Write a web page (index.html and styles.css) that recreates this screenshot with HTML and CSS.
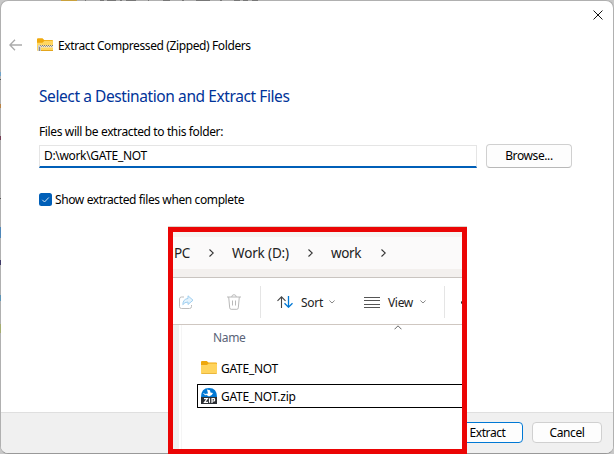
FILE: index.html
```html
<!DOCTYPE html>
<html lang="en">
<head>
<meta charset="utf-8">
<title>Extract Compressed (Zipped) Folders</title>
<link rel="stylesheet" href="styles.css">
</head>
<body>
<div class="desktop">
  <main class="dialog">
    <div class="titlebar">
      <svg class="close" viewBox="0 0 11 11"><path d="M.6.6l9.8 9.8M10.4.6L.6 10.4"/></svg>
    </div>
    <header class="head">
      <svg class="back" viewBox="0 0 13 12"><path d="M6 .7L.9 6 6 11.3M1 6h12"/></svg>
      <svg class="folder" viewBox="0 0 16 14">
        <path d="M0 1.2Q0 .2 1 .2h4.500L7.200 2H15q1 0 1 1v3H0z" fill="#f0a90c"/>
        <path d="M0 4.800h5.500L7.500 2.700H15q1 0 1 1V12q0 1-1 1H1q-1 0-1-1z" fill="#ffd660"/>
        <path d="M1 8.500h15" stroke="#f1ead8" stroke-width="2"/>
        <path d="M3 7.500h13" stroke="#777" stroke-dasharray="1 1"/>
        <path d="M4 8.500h12" stroke="#999" stroke-dasharray="1 1"/>
        <path d="M1 7.500h2.500v3H4V13H1z" fill="#ccc"/><path d="M2.500 9v4" stroke="#888"/>
        <path d="M4 12.500h12" stroke="#e3a51d"/>
      </svg>
      <span class="caption">Extract Compressed (Zipped) Folders</span>
    </header>
    <section class="content">
      <h1 class="heading">Select a Destination and Extract Files</h1>
      <label class="label" for="dest">Files will be extracted to this folder:</label>
      <div class="row">
        <div class="field" id="dest"><span class="path">D:\work\GATE_NOT</span></div>
        <button class="button browse"><span>Browse...</span></button>
      </div>
      <div class="check">
        <svg class="box" viewBox="0 0 13 13"><rect width="13" height="13" rx="2.500" fill="#005fb8"/><path d="M3.300 6.800l2.200 2.200 4.300-4.500" fill="none" stroke="#d5e7f6"/></svg>
        <span class="checktext">Show extracted files when complete</span>
      </div>
    </section>
    <footer class="footer">
      <button class="button extract"><span>Extract</span></button>
      <button class="button cancel"><span>Cancel</span></button>
    </footer>
  </main>

  <aside class="inset">
    <nav class="address">
      <span class="crumb pc">PC</span>
      <svg class="sep s1" viewBox="0 0 5 8"><path d="M.5.5L4.300 4 .5 7.500"/></svg>
      <span class="crumb drive">Work (D:)</span>
      <svg class="sep s2" viewBox="0 0 5 8"><path d="M.5.5L4.300 4 .5 7.500"/></svg>
      <span class="crumb work">work</span>
      <svg class="sep s3" viewBox="0 0 5 8"><path d="M.5.5L4.300 4 .5 7.500"/></svg>
    </nav>
    <div class="toolbar">
      <svg class="share" viewBox="0 0 15 14"><path d="M5 2H2.500Q.5 2 .5 4v7.500q0 2 2 2h8q2 0 2-2V10" fill="none" stroke="#bdbdbd"/><path d="M9 .8l5 4.400-5 4.300V7Q5.500 7 3.800 9.700 4 4 9 3.500z" fill="#e5f3fc" stroke="#9fcff0"/></svg>
      <svg class="trash" viewBox="0 0 14 16"><path d="M0 3h14M4.700 3Q5 .7 7 .7T9.300 3M1.700 3l1 10.800q.1 1.500 1.500 1.500h5.600q1.400 0 1.500-1.500l1-10.800M5.500 6.500v5M8.500 6.500v5" fill="none" stroke="#b9b9b9"/></svg>
      <i class="rule r1"></i>
      <svg class="sort" viewBox="0 0 16 12"><path d="M4.500 12V.8M.5 4.800l4-4 4 4" fill="none" stroke="#444" stroke-width="1.100"/><path d="M11.500 0v11.200M7.500 7.200l4 4 4-4" fill="none" stroke="#0078d4" stroke-width="1.300"/></svg>
      <span class="tool sorttext">Sort</span>
      <svg class="drop d1" viewBox="0 0 6 4"><path d="M.4.5L3 3 5.600.5"/></svg>
      <svg class="lines" viewBox="0 0 16 11"><path d="M0 .5h16M0 3.500h16M0 7.500h16M0 10.500h16" stroke="#555"/></svg>
      <span class="tool viewtext">View</span>
      <svg class="drop d2" viewBox="0 0 6 4"><path d="M.4.5L3 3 5.600.5"/></svg>
      <i class="rule r2"></i>
      <i class="more"></i>
    </div>
    <div class="files">
      <div class="gutter"></div>
      <div class="list">
        <svg class="asc" viewBox="0 0 8 5"><path d="M.5 4.300L4 .8l3.500 3.500" fill="none" stroke="#666"/></svg>
        <div class="name">Name</div>
        <div class="file">
          <svg class="icon" viewBox="0 0 16 16"><path d="M0 2q0-1 1-1h4.700L7.500 2.500H15q1 0 1 1v2H0z" fill="#eea70c"/><path d="M0 5.300h5.700L7.700 3.500H15q1 0 1 1V13q0 1-1 1H1q-1 0-1-1z" fill="#ffd45d"/><path d="M.5 13.500h15" stroke="#eab73e"/></svg>
          <span class="filename">GATE_NOT</span>
        </div>
        <div class="file selected">
          <svg class="icon" viewBox="0 0 16 16"><path d="M0 9Q0 0 8 0t8 9z" fill="#0078d4"/><path d="M6 1.500l3 .8.500 2.200 2.500.5-1.200 2L8 8.500 4 6l3-.5z" fill="#fff"/><path d="M2.500 5.500L5 7" stroke="#fff"/><rect y="9" width="16" height="7" fill="#2b2e33"/><path d="M3 10.700h3.300L3.500 14.300H7M8.500 10.200v4.600M11 15v-4.300h2.300q.8 1.300 0 2.300H11" fill="none" stroke="#fff" stroke-width="1.200"/></svg>
          <span class="filename">GATE_NOT.zip</span>
        </div>
      </div>
    </div>
  </aside>
  <i class="edge left"></i>
  <i class="edge top"></i>
</div>
</body>
</html>
```

FILE: styles.css
```css
* { box-sizing: border-box; }
body { margin: 0; font: 12px/16px "Noto Sans", "Open Sans", sans-serif; color: #000; }
svg { display: block; flex: none; fill: none; }
span { white-space: nowrap; }
.desktop { position: relative; width: 614px; height: 454px; overflow: hidden; background: #c8c8c8; }
.dialog { width: 614px; height: 454px; display: flex; flex-direction: column; background: #fff; border: 1px solid #b0b0b0; border-bottom-color: #999; border-radius: 8px; overflow: hidden; }
.titlebar { height: 32px; display: flex; justify-content: flex-end; padding: 9px 10px 0 0; }
.close { width: 10px; height: 10px; stroke: #111; stroke-width: 1.100; }
.head { height: 24px; display: flex; align-items: center; padding-left: 8px; }
.back { width: 13px; height: 12px; stroke: #aaa; stroke-width: 1.300; }
.folder { width: 16px; height: 14px; margin-left: 15px; }
.caption { margin-left: 5px; padding-top: 2px; font-size: 12px; letter-spacing: -.39px; }
.content { flex: 1; padding: 28px 0 0 38px; }
.heading { margin: 0; font-size: 15.500px; line-height: 22px; font-weight: 400; color: #003399; letter-spacing: -.41px; }
.label { display: block; margin-top: 17px; font-size: 12px; line-height: 16px; letter-spacing: -.37px; }
.row { display: flex; margin-top: 4px; }
.field { width: 438px; height: 23px; margin-top: 1px; padding: 2px 0 0 4px; border: 1px solid #e5e5e5; border-bottom: 2px solid #005fb8; }
.path { display: block; font-size: 12px; line-height: 16px; letter-spacing: -.33px; }
.button { display: flex; align-items: center; justify-content: center; padding: 0; font: 12px/16px "Noto Sans", sans-serif; letter-spacing: -.4px; color: #000; background: #fdfdfd; border: 1px solid #d0d0d0; border-radius: 4px; }
.browse { width: 86px; height: 24px; margin-left: 9px; border-bottom-color: #b8b8b8; }
.check { display: flex; align-items: center; height: 16px; margin-top: 23px; }
.box { width: 13px; height: 13px; }
.checktext { margin-left: 3px; padding-top: 1px; font-size: 12px; letter-spacing: -.39px; }
.footer { height: 41px; display: flex; justify-content: flex-end; padding: 9px 11px 0 0; background: #f0f0f0; border-top: 1px solid #dfdfdf; }
.extract { width: 71px; height: 21px; border-color: #0078d4; }
.cancel { width: 70px; height: 21px; margin-left: 9px; }
.inset { position: absolute; left: 168px; top: 227px; width: 299px; height: 227px; border: 5px solid #eb0505; background: #fff; box-shadow: 0 -1px 0 #ddd5cb; overflow: hidden; }
.address { height: 46px; display: flex; align-items: center; padding-bottom: 3px; background: linear-gradient(#f7f3f1 0 5px, #fbfafa 5px 37px, #f3f0ee 37px); border-bottom: 1px solid #c9c4c0; }
.crumb { font-size: 13.500px; letter-spacing: -.35px; color: #222; }
.pc { width: 17px; margin-left: 1px; }
.drive { width: 58px; margin-left: 18px; letter-spacing: -.15px; }
.work { width: 31px; margin-left: 18px; }
.sep { width: 5px; height: 8px; stroke: #333; stroke-width: 1.100; }
.s1 { margin-left: 18px; }
.s2 { margin-left: 18px; }
.s3 { margin-left: 19px; }
.toolbar { height: 47px; display: flex; align-items: center; border-bottom: 1px solid #cfc7c1; padding-top: 2px; }
.share { width: 15px; height: 14px; margin-left: 6px; }
.trash { width: 14px; height: 16px; margin-left: 33px; }
.rule { flex: none; width: 1px; height: 32px; background: #e5e5e5; }
.r1 { margin-left: 19px; }
.sort { width: 16px; height: 12px; margin-left: 16px; }
.tool { padding-top: 2px; font-size: 12px; letter-spacing: -.3px; color: #222; }
.sorttext { width: 22px; margin-left: 8px; }
.drop { width: 6px; height: 4px; stroke: #888; }
.d1 { margin-left: 6px; }
.lines { width: 16px; height: 11px; margin-left: 29px; }
.viewtext { width: 25px; margin-left: 8px; }
.d2 { margin-left: 7px; }
.r2 { margin-left: 18px; }
.more { flex: none; width: 3px; height: 3px; margin-left: 16px; border-radius: 2px; background: #222; }
.files { height: 124px; display: flex; }
.gutter { width: 6px; background: #f0f0f0; }
.list { width: 282px; margin-left: 2px; border-left: 1px solid #f5f5f5; }
.asc { width: 8px; height: 5px; margin-left: 212px; }
.name { margin: 0 0 10px 31px; font-size: 12px; line-height: 16px; letter-spacing: -.35px; color: #5a6478; }
.file { display: flex; align-items: center; height: 24px; margin: 0 0 4px 15px; padding-left: 4px; font-size: 12px; letter-spacing: -.25px; }
.filename { padding-top: 2px; }
.icon { width: 16px; height: 16px; margin-right: 4px; }
.selected { border: 1px solid #000; border-right: 0; padding-left: 3px; border-radius: 1px 0 0 1px; }
.edge { position: absolute; left: 0; }
.left { top: 0; width: 1px; height: 454px; background: linear-gradient(transparent 72px, #6fa3c8 72px 76px, transparent 76px 79px, #555 79px 80px, transparent 80px 104px, #b98344 104px 108px, transparent 108px 136px, #743e55 136px 140px, transparent 140px 198px, #555 198px 199px, transparent 199px 227px, #4f87b8 227px 238px, transparent 238px 260px, #3f3a68 260px 265px, transparent 265px 295px, #5d94b5 295px 301px, transparent 301px 324px, #a5ad70 324px 333px, transparent 333px); }
.top { top: 0; width: 614px; height: 1px; background: linear-gradient(90deg, transparent 61px, #c9a13c 61px 77px, transparent 77px 85px, #777 85px 86px, transparent 86px 100px, #777 100px 104px, transparent 104px 107px, #777 107px 116px, transparent 116px 120px, #777 120px 122px, transparent 122px 126px, #777 126px 136px, transparent 136px 148px, #777 148px 149px, transparent 149px 163px, #777 163px 170px, transparent 170px 182px, #777 182px 184px, transparent 184px 196px, #777 196px 210px, transparent 210px 220px, #777 220px 222px, transparent 222px 234px, #777 234px 240px, transparent 240px 243px, #777 243px 248px, transparent 248px 252px, #777 252px 258px, transparent 258px); }
```
